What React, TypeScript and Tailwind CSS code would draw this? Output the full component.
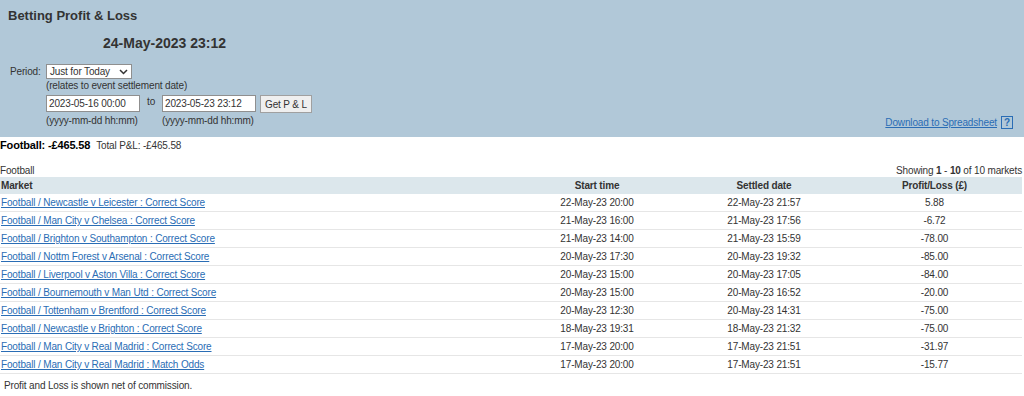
const rows = [
  ["Football / Newcastle v Leicester : Correct Score", "22-May-23 20:00", "22-May-23 21:57", "5.88"],
  ["Football / Man City v Chelsea : Correct Score", "21-May-23 16:00", "21-May-23 17:56", "-6.72"],
  ["Football / Brighton v Southampton : Correct Score", "21-May-23 14:00", "21-May-23 15:59", "-78.00"],
  ["Football / Nottm Forest v Arsenal : Correct Score", "20-May-23 17:30", "20-May-23 19:32", "-85.00"],
  ["Football / Liverpool v Aston Villa : Correct Score", "20-May-23 15:00", "20-May-23 17:05", "-84.00"],
  ["Football / Bournemouth v Man Utd : Correct Score", "20-May-23 15:00", "20-May-23 16:52", "-20.00"],
  ["Football / Tottenham v Brentford : Correct Score", "20-May-23 12:30", "20-May-23 14:31", "-75.00"],
  ["Football / Newcastle v Brighton : Correct Score", "18-May-23 19:31", "18-May-23 21:32", "-75.00"],
  ["Football / Man City v Real Madrid : Correct Score", "17-May-23 20:00", "17-May-23 21:51", "-31.97"],
  ["Football / Man City v Real Madrid : Match Odds", "17-May-23 20:00", "17-May-23 21:51", "-15.77"],
];

export default function App() {
  return (
    <div className="w-[1024px] h-[396px] bg-white text-[#333] text-[10px] leading-[13px] tracking-[-0.15px] font-['Liberation_Sans',Arial,sans-serif]">
      {/* header panel */}
      <div className="h-[137px] bg-[#b1c8d8] pl-2 pr-[10px] pt-[8px]">
        <h1 className="text-[13px] leading-[16px] font-bold tracking-normal">Betting Profit &amp; Loss</h1>
        <div className="mt-[11px] ml-[95px] text-[14px] leading-[17px] font-bold tracking-normal">24-May-2023 23:12</div>

        <div className="mt-[12px] flex items-end justify-between">
          <div className="flex pl-[2px]">
            <div className="w-[36px] pt-[1px]">Period:</div>
            <div className="flex flex-col">
              <div className="w-[86px] h-[15px] bg-white border border-[#8f8f8f] flex items-center justify-between pl-[3px] pr-[3px]">
                <span>Just for Today</span>
                <svg width="9" height="6" viewBox="0 0 9 6" fill="none" stroke="#333" strokeWidth="1.5">
                  <path d="M1 1l3.5 3.5L8 1" />
                </svg>
              </div>
              <div>(relates to event settlement date)</div>
              <div className="mt-[3px] flex items-start">
                <div className="flex flex-col">
                  <div className="w-[94px] h-[17px] bg-white border border-[#8f8f8f] pl-[2px] flex items-center">2023-05-16 00:00</div>
                  <div className="mt-[2px]">(yyyy-mm-dd hh:mm)</div>
                </div>
                <div className="w-[22px] pl-[7px]">to</div>
                <div className="flex flex-col">
                  <div className="w-[94px] h-[17px] bg-white border border-[#8f8f8f] pl-[2px] flex items-center">2023-05-23 23:12</div>
                  <div className="mt-[2px]">(yyyy-mm-dd hh:mm)</div>
                </div>
                <div className="ml-[4px] w-[52px] h-[18px] bg-[#efefef] border border-[#a0a0a0] flex items-center justify-center">Get P &amp; L</div>
              </div>
            </div>
          </div>
          <div className="flex items-center gap-[4px] mb-[-2px] mr-[1px]">
            <a className="text-[#2a6db5] underline">Download to Spreadsheet</a>
            <span className="w-[12px] h-[13px] border border-[#2a6db5] text-[#2a6db5] font-bold text-[10px] flex items-center justify-center">?</span>
          </div>
        </div>
      </div>

      {/* summary */}
      <div className="mt-[2px] flex gap-[6px]">
        <span className="font-bold text-black text-[11px]">Football: -£465.58</span>
        <span>Total P&amp;L: -£465.58</span>
      </div>

      <div className="mt-[12px] leading-[13px] flex justify-between pr-[2px]">
        <span>Football</span>
        <span>
          Showing <b>1</b> - <b>10</b> of 10 markets
        </span>
      </div>

      {/* markets table */}
      <div className="w-[1022px]">
        <div className="grid grid-cols-[513px_168px_166px_1fr] h-[17px] items-center bg-[#dce7ec] font-bold">
          <div className="pl-[1px]">Market</div>
          <div className="text-center">Start time</div>
          <div className="text-center">Settled date</div>
          <div className="text-center">Profit/Loss (£)</div>
        </div>
        {rows.map((r) => (
          <div
            key={r[0] + r[1]}
            className="grid grid-cols-[513px_168px_166px_1fr] h-[18px] items-center border-b border-[#e6e6e6]"
          >
            <div className="pl-[1px]">
              <a className="text-[#2a6db5] underline">{r[0]}</a>
            </div>
            <div className="text-center">{r[1]}</div>
            <div className="text-center">{r[2]}</div>
            <div className="text-center">{r[3]}</div>
          </div>
        ))}
      </div>

      <div className="mt-[5px] pl-[4px]">Profit and Loss is shown net of commission.</div>
    </div>
  );
}
